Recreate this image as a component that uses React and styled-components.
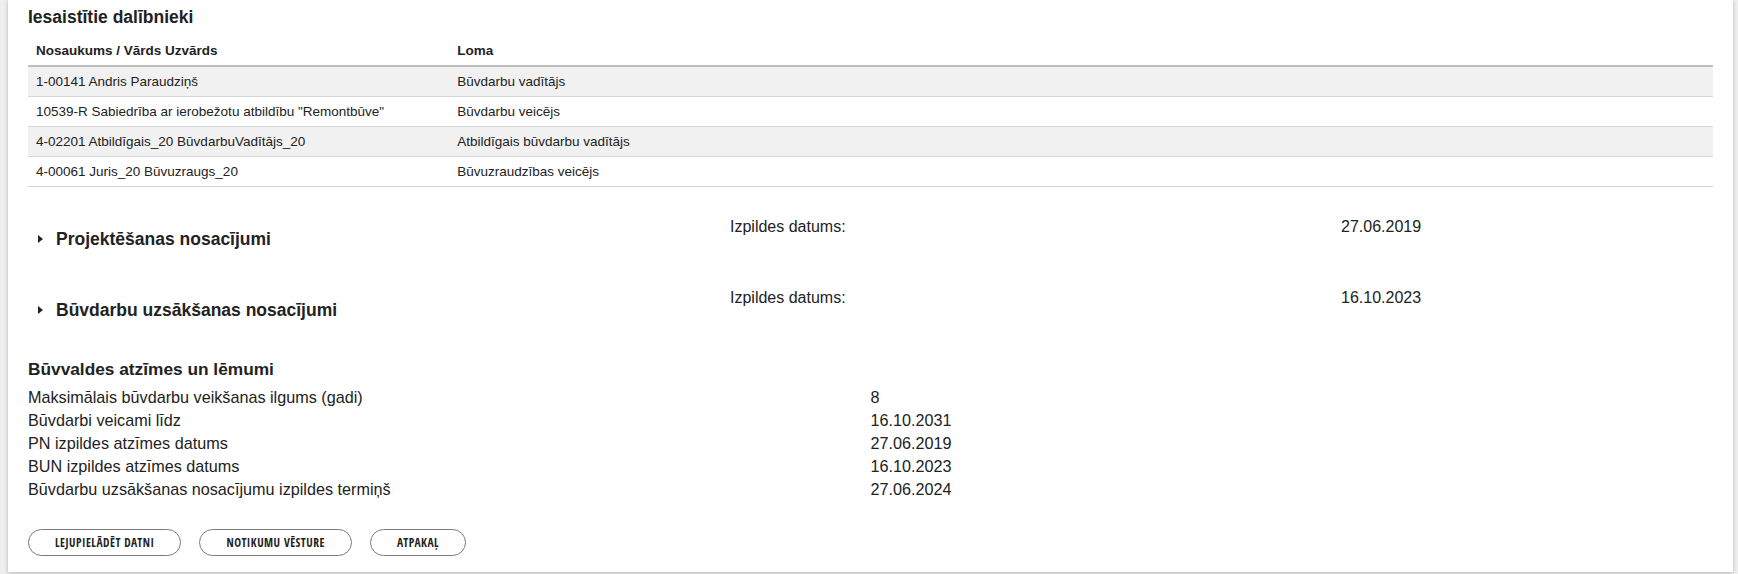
import React from "react";
import styled, { createGlobalStyle } from "styled-components";

const GlobalStyle = createGlobalStyle`
  body {
    margin: 0;
    background: #efefef;
    font-family: "Liberation Sans", Arial, sans-serif;
    color: #222;
  }
`;

const Page = styled.div`
  padding: 0 5px 4px 8px;
`;

const Card = styled.div`
  background: #fff;
  box-shadow: 0 1px 4px rgba(0, 0, 0, 0.25);
  padding: 7px 20px 16px;
`;

const Title = styled.h2`
  margin: 0 0 9px;
  font-size: 17.5px;
  line-height: 20px;
  font-weight: bold;
`;

const TableRow = styled.div`
  display: grid;
  grid-template-columns: 25% 75%;
  align-items: center;
  box-sizing: border-box;
  height: ${props => (props.head ? "31px" : "30px")};
  font-size: 13.5px;
  font-weight: ${props => (props.head ? "bold" : "normal")};
  background: ${props => (props.shaded ? "#f1f1f1" : "#fff")};
  border-bottom: ${props => (props.head ? "2px solid #bdbdbd" : "1px solid #d6d6d6")};
`;

const Cell = styled.div`
  padding: 0 8px;
  white-space: nowrap;
`;

const Conditions = styled.div`
  margin-top: 30px;
`;

const ConditionRow = styled.div`
  display: grid;
  grid-template-columns: 702px 611px 1fr;
  align-items: start;
  font-size: 16px;
  line-height: 20px;
`;

const Summary = styled.div`
  display: flex;
  align-items: center;
  gap: 13px;
  padding-left: 10px;
  margin: 12px 0 39px;
`;

const Caret = styled.span`
  width: 0;
  height: 0;
  border-left: 5px solid #222;
  border-top: 4px solid transparent;
  border-bottom: 4px solid transparent;
`;

const ConditionTitle = styled.h3`
  margin: 0;
  font-size: 17.5px;
  line-height: 20px;
  font-weight: bold;
`;

const SubTitle = styled.h3`
  margin: 0 0 6px;
  font-size: 17.3px;
  line-height: 21px;
  font-weight: bold;
`;

const InfoList = styled.div`
  display: grid;
  grid-template-columns: 50% 50%;
  font-size: 16.2px;
  line-height: 23px;
`;

const Buttons = styled.div`
  display: flex;
  gap: 18px;
  margin-top: 28px;
`;

const Button = styled.button`
  height: 27px;
  padding: 0 26px;
  background: #fff;
  border: 1px solid #7a7a7a;
  border-radius: 14px;
  color: #222;
  font-family: "Open Sans Condensed", "Liberation Sans Narrow", "Open Sans", sans-serif;
  font-stretch: 75%;
  font-weight: bold;
  font-size: 11.5px;
  letter-spacing: 0.5px;
  text-transform: uppercase;
  cursor: pointer;
`;

const participants = [
  ["1-00141 Andris Paraudziņš", "Būvdarbu vadītājs"],
  ["10539-R Sabiedrība ar ierobežotu atbildību \"Remontbūve\"", "Būvdarbu veicējs"],
  ["4-02201 Atbildīgais_20 BūvdarbuVadītājs_20", "Atbildīgais būvdarbu vadītājs"],
  ["4-00061 Juris_20 Būvuzraugs_20", "Būvuzraudzības veicējs"],
];

const conditions = [
  ["Projektēšanas nosacījumi", "27.06.2019"],
  ["Būvdarbu uzsākšanas nosacījumi", "16.10.2023"],
];

const decisions = [
  ["Maksimālais būvdarbu veikšanas ilgums (gadi)", "8"],
  ["Būvdarbi veicami līdz", "16.10.2031"],
  ["PN izpildes atzīmes datums", "27.06.2019"],
  ["BUN izpildes atzīmes datums", "16.10.2023"],
  ["Būvdarbu uzsākšanas nosacījumu izpildes termiņš", "27.06.2024"],
];

export default function App() {
  return (
    <Page>
      <GlobalStyle />
      <Card>
        <Title>Iesaistītie dalībnieki</Title>
        <TableRow head>
          <Cell>Nosaukums / Vārds Uzvārds</Cell>
          <Cell>Loma</Cell>
        </TableRow>
        {participants.map(([name, role], i) => (
          <TableRow key={name} shaded={i % 2 === 0}>
            <Cell>{name}</Cell>
            <Cell>{role}</Cell>
          </TableRow>
        ))}

        <Conditions>
          {conditions.map(([title, date]) => (
            <ConditionRow key={title}>
              <Summary>
                <Caret />
                <ConditionTitle>{title}</ConditionTitle>
              </Summary>
              <div>Izpildes datums:</div>
              <div>{date}</div>
            </ConditionRow>
          ))}
        </Conditions>

        <SubTitle>Būvvaldes atzīmes un lēmumi</SubTitle>
        <InfoList>
          {decisions.map(([label, value]) => (
            <React.Fragment key={label}>
              <div>{label}</div>
              <div>{value}</div>
            </React.Fragment>
          ))}
        </InfoList>

        <Buttons>
          <Button>Lejupielādēt datni</Button>
          <Button>Notikumu vēsture</Button>
          <Button>Atpakaļ</Button>
        </Buttons>
      </Card>
    </Page>
  );
}
